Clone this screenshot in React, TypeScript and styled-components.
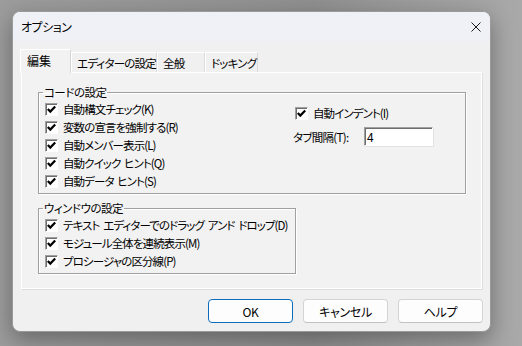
import React, { FunctionComponent } from 'react';
import styled, { createGlobalStyle, css } from 'styled-components';

const GlobalStyle = createGlobalStyle`
    html, body {
        margin: 0;
        padding: 0;
    }
    body {
        font-family: 'Noto Sans CJK JP', 'Noto Sans', sans-serif;
        font-size: 12px;
        color: #000;
    }
`;

const Desktop = styled.div`
    width: 522px;
    height: 346px;
    box-sizing: border-box;
    padding: 11px 0 0 12px;
    background: linear-gradient(90deg, #9c9c9c 0%, #8f8f8f 60%, #a9a9a9 100%);
    overflow: hidden;
`;

const Dialog = styled.div`
    width: 479px;
    height: 321px;
    display: flex;
    flex-direction: column;
    background: #f0f0f0;
    border-radius: 8px;
    border: 1px solid #9a9a9a;
    box-sizing: border-box;
    box-shadow: 0 8px 22px rgba(0, 0, 0, 0.32);
    overflow: hidden;
`;

const TitleBar = styled.div`
    height: 29px;
    flex: none;
    display: flex;
    align-items: center;
    justify-content: space-between;
    padding: 0 9px 0 8px;
    background: #eff1f6;
`;

const Title = styled.span`
    font-size: 12px;
    letter-spacing: -0.5px;
    font-feature-settings: 'palt';
`;

const CloseIcon = styled.svg`
    display: block;
    margin-top: 1px;
`;

const Body = styled.div`
    flex: 1;
    display: flex;
    flex-direction: column;
    padding: 8px 8px 0 7px;
`;

const TabRow = styled.div`
    display: flex;
    align-items: flex-end;
    height: 23px;
    position: relative;
    z-index: 1;
`;

const Tab = styled.div<{ $active?: boolean; $width: number }>`
    width: ${(p) => p.$width}px;
    box-sizing: border-box;
    height: 20px;
    display: flex;
    align-items: center;
    padding-left: 5px;
    font-size: 11.5px;
    font-feature-settings: 'palt';
    letter-spacing: -0.8px;
    white-space: nowrap;
    background: #f0f0f0;
    border-top: 1px solid #fff;
    border-left: 1px solid #fff;
    border-right: 1px solid #dcdcdc;

    ${(p) =>
        p.$active &&
        css`
            height: 24px;
            margin-bottom: -1px;
            padding-left: 6px;
            padding-bottom: 2px;
            font-size: 12px;
            letter-spacing: 0;
            background: #f2f2f2;
            border-right: 1px solid #d6d6d6;
        `}
`;

const Panel = styled.div`
    height: 217px;
    box-sizing: border-box;
    margin-left: 1px;
    padding: 12px 0 0 16px;
    background: #f2f2f2;
    border: 1px solid #fff;
    box-shadow: 1px 1px 0 #dedede;
`;

const Group = styled.fieldset<{ $width: number; $gap?: number }>`
    width: ${(p) => p.$width}px;
    box-sizing: border-box;
    margin: ${(p) => p.$gap || 0}px 0 0 0;
    padding: 1px 6px 3px 6px;
    border: 1px solid #a0a0a0;
    box-shadow: 1px 1px 0 #fff, inset 1px 1px 0 #fff;
    min-width: 0;
`;

const Legend = styled.legend`
    padding: 0 1px;
    margin-left: -2px;
    font-size: 11.5px;
    line-height: 14px;
    font-feature-settings: 'palt';
    letter-spacing: -0.5px;
`;

const CodeGrid = styled.div`
    display: grid;
    grid-template-columns: 250px 1fr;
`;

const Column = styled.div<{ $offset?: number }>`
    display: flex;
    flex-direction: column;
    padding-top: ${(p) => p.$offset || 0}px;
`;

const CheckRow = styled.label`
    display: flex;
    align-items: center;
    gap: 5px;
    height: 18px;
    font-size: 11.5px;
    font-feature-settings: 'palt';
    letter-spacing: -0.9px;
    word-spacing: 2px;
    white-space: pre;
`;

const Box = styled.span`
    width: 13px;
    height: 13px;
    box-sizing: border-box;
    flex: none;
    display: flex;
    align-items: center;
    justify-content: center;
    background: #fff;
    border-top: 1px solid #a0a0a0;
    border-left: 1px solid #a0a0a0;
    border-right: 1px solid #fff;
    border-bottom: 1px solid #fff;
    box-shadow: inset 1px 1px 0 #6d6d6d;
`;

const FieldRow = styled.div`
    display: flex;
    align-items: center;
    margin: 5px 0 0 -2px;
    height: 19px;
`;

const FieldLabel = styled.span`
    width: 71px;
    font-size: 11.5px;
    font-feature-settings: 'palt';
    letter-spacing: -0.7px;
`;

const TextInput = styled.div`
    width: 69px;
    height: 19px;
    box-sizing: border-box;
    padding: 0 0 0 2px;
    display: flex;
    align-items: center;
    font-size: 12px;
    background: #fff;
    border-top: 1px solid #a0a0a0;
    border-left: 1px solid #a0a0a0;
    border-right: 1px solid #fff;
    border-bottom: 1px solid #fff;
    box-shadow: inset 1px 1px 0 #6d6d6d, 1px 1px 0 #e3e3e3;
`;

const Footer = styled.div`
    flex: none;
    display: flex;
    justify-content: flex-end;
    gap: 10px;
    padding: 10px 7px 8px 0;
`;

const Button = styled.button<{ $primary?: boolean }>`
    width: 85px;
    height: 24px;
    box-sizing: border-box;
    padding: 0;
    font-family: 'Noto Sans CJK JP', 'Noto Sans', sans-serif;
    font-size: 12px;
    font-feature-settings: 'palt';
    letter-spacing: -0.3px;
    color: #000;
    background: #fdfdfd;
    border-radius: 4px;
    border: 1px solid #d4d4d4;
    border-bottom-color: #c2c2c2;

    ${(p) =>
        p.$primary &&
        css`
            border: 1px solid #0f6cbd;
            box-shadow: inset 0 0 0 1px #fdfdfd;
        `}
`;

const Check: FunctionComponent<{ label: string }> = ({ label }) => (
    <CheckRow>
        <Box>
            <svg width='9' height='9' viewBox='0 0 9 9'>
                <path d='M0.8 4 L3.3 6.6 L8.2 1.6' stroke='#000' strokeWidth='2.2' fill='none' />
            </svg>
        </Box>
        {label}
    </CheckRow>
);

const codeChecks = [
    '自動構文チェック(K)',
    '変数の宣言を強制する(R)',
    '自動メンバー表示(L)',
    '自動クイック ヒント(Q)',
    '自動データ ヒント(S)',
];

const windowChecks = [
    'テキスト エディターでのドラッグ アンド ドロップ(D)',
    'モジュール全体を連続表示(M)',
    'プロシージャの区分線(P)',
];

const tabs = [
    { name: '編集', width: 51 },
    { name: 'エディターの設定', width: 86 },
    { name: '全般', width: 48 },
    { name: 'ドッキング', width: 53 },
];

const App: FunctionComponent = () => {
    return (
        <>
            <GlobalStyle />
            <Desktop>
                <Dialog>
                    <TitleBar>
                        <Title>オプション</Title>
                        <CloseIcon width='10' height='10' viewBox='0 0 10 10'>
                            <path d='M0.5 0.5 L9.5 9.5 M9.5 0.5 L0.5 9.5' stroke='#1a1a1a' strokeWidth='1' />
                        </CloseIcon>
                    </TitleBar>
                    <Body>
                        <TabRow>
                            {tabs.map((tab, i) => (
                                <Tab key={tab.name} $active={i === 0} $width={tab.width}>
                                    {tab.name}
                                </Tab>
                            ))}
                        </TabRow>
                        <Panel>
                            <Group $width={428}>
                                <Legend>コードの設定</Legend>
                                <CodeGrid>
                                    <Column>
                                        {codeChecks.map((c) => (
                                            <Check key={c} label={c} />
                                        ))}
                                    </Column>
                                    <Column $offset={4}>
                                        <Check label='自動インデント(I)' />
                                        <FieldRow>
                                            <FieldLabel>タブ間隔(T):</FieldLabel>
                                            <TextInput>4</TextInput>
                                        </FieldRow>
                                    </Column>
                                </CodeGrid>
                            </Group>
                            <Group $width={258} $gap={7}>
                                <Legend>ウィンドウの設定</Legend>
                                <Column>
                                    {windowChecks.map((c) => (
                                        <Check key={c} label={c} />
                                    ))}
                                </Column>
                            </Group>
                        </Panel>
                    </Body>
                    <Footer>
                        <Button $primary>OK</Button>
                        <Button>キャンセル</Button>
                        <Button>ヘルプ</Button>
                    </Footer>
                </Dialog>
            </Desktop>
        </>
    );
};

export default App;
